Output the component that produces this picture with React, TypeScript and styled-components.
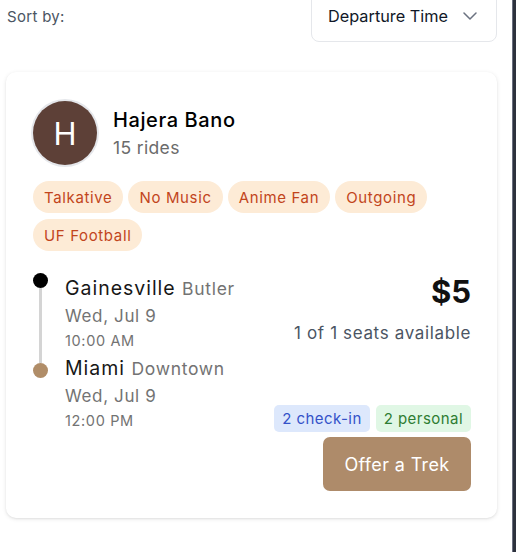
import React from "react";
import styled, { createGlobalStyle } from "styled-components";

const Global = createGlobalStyle`
  html, body { margin: 0; padding: 0; background: #ffffff; }
  body { font-family: Inter, "Noto Sans", sans-serif; overflow: hidden; }
  * { box-sizing: border-box; }
`;

const Frame = styled.div`
  display: flex;
  width: 516px;
  height: 552px;
  overflow: hidden;
`;

const Main = styled.main`
  flex: 1;
  padding: 0 15px 0 6px;
`;

const EdgeBar = styled.div`
  width: 4px;
  background: #2d323d;
  border-left: 1px solid #6b7080;
`;

const SortRow = styled.div`
  display: flex;
  align-items: center;
  justify-content: space-between;
  margin-top: -11px;
`;

const SortLabel = styled.span`
  font-size: 15px;
  color: #4b5563;
  padding: 1px 0 0 1px;
  letter-spacing: 0.02em;
`;

const Select = styled.div`
  width: 186px;
  height: 53px;
  border: 1px solid #e5e7eb;
  border-radius: 8px;
  display: flex;
  align-items: center;
  justify-content: space-between;
  padding: 0 19px 0 16px;
  font-size: 16.3px;
  color: #111827;
  background: #fff;
`;

const Card = styled.section`
  margin-top: 30px;
  background: #fff;
  border-radius: 10px;
  box-shadow: 0 1px 4px rgba(0, 0, 0, 0.1), 0 1px 2px rgba(0, 0, 0, 0.05);
  padding: 29px 26px 27px 27px;
  letter-spacing: 0.04em;
`;

const Header = styled.div`
  display: flex;
  align-items: center;
  gap: 16px;
`;

const Avatar = styled.div`
  width: 64px;
  height: 64px;
  border-radius: 50%;
  background: #5d4037;
  box-shadow: 0 0 0 2px #e5e7eb;
  color: #fff;
  font-size: 31px;
  letter-spacing: 0;
  display: flex;
  align-items: center;
  justify-content: center;
`;

const NameBlock = styled.div`
  display: flex;
  flex-direction: column;
  gap: 5px;
  margin-top: -1px;
`;

const Name = styled.div`
  font-size: 20px;
  font-weight: 500;
  color: #000;
  letter-spacing: 0.03em;
`;

const Rides = styled.div`
  font-size: 17.5px;
  color: #6b6b6b;
  letter-spacing: 0.02em;
`;

const Tags = styled.div`
  display: flex;
  flex-wrap: wrap;
  gap: 6px 5px;
  margin-top: 16px;
`;

const Tag = styled.span`
  height: 32px;
  padding: 0 11px;
  border-radius: 16px;
  background: #fdebd6;
  color: #c2451c;
  font-size: 15px;
  display: inline-flex;
  align-items: center;
`;

const Body = styled.div`
  display: flex;
  justify-content: space-between;
  margin-top: 22px;
`;

const Route = styled.div`
  display: grid;
  grid-template-columns: 14px 1fr;
  column-gap: 18px;
`;

const Rail = styled.div`
  display: flex;
  flex-direction: column;
  align-items: center;
`;

const Dot = styled.span<{ $color: string }>`
  width: 15px;
  height: 15px;
  border-radius: 50%;
  background: ${(p) => p.$color};
  flex-shrink: 0;
`;

const Line = styled.span`
  width: 3px;
  height: 75px;
  background: #d4d4d4;
`;

const Stops = styled.div`
  display: flex;
  flex-direction: column;
`;

const Stop = styled.div`
  display: flex;
  flex-direction: column;
`;

const City = styled.div`
  font-size: 19.5px;
  color: #171717;
  line-height: 31px;
  letter-spacing: 0.05em;
`;

const Area = styled.span`
  font-size: 17.5px;
  color: #737373;
  letter-spacing: 0.04em;
`;

const DateText = styled.div`
  font-size: 17px;
  color: #737373;
  line-height: 25px;
`;

const TimeText = styled.div`
  font-size: 14.5px;
  color: #737373;
  line-height: 24px;
`;

const Side = styled.div`
  display: flex;
  flex-direction: column;
  align-items: flex-end;
`;

const Price = styled.div`
  font-size: 31px;
  font-weight: 700;
  color: #111;
  line-height: 38px;
  letter-spacing: 0;
`;

const Seats = styled.div`
  font-size: 17px;
  color: #4b5563;
  margin-top: 12px;
`;

const Badges = styled.div`
  display: flex;
  gap: 6px;
  margin-top: 62px;
`;

const Badge = styled.span<{ $bg: string; $fg: string }>`
  height: 27px;
  padding: 0 8px;
  border-radius: 5px;
  background: ${(p) => p.$bg};
  color: ${(p) => p.$fg};
  font-size: 15px;
  letter-spacing: 0.03em;
  display: inline-flex;
  align-items: center;
`;

const Button = styled.button`
  margin-top: 5px;
  width: 148px;
  height: 54px;
  border: none;
  border-radius: 7px;
  background: #ae8b6a;
  color: #fff;
  font-family: inherit;
  font-size: 18px;
  letter-spacing: 0.02em;
  cursor: pointer;
`;

const Chevron = () => (
  <svg width="14" height="8" viewBox="0 0 14 8" fill="none" stroke="#6b7280" strokeWidth="1.5" strokeLinecap="round" strokeLinejoin="round">
    <path d="M1 1l6 6 6-6" />
  </svg>
);

const tags = ["Talkative", "No Music", "Anime Fan", "Outgoing", "UF Football"];

export default function App() {
  return (
    <>
      <Global />
      <Frame>
        <Main>
          <SortRow>
            <SortLabel>Sort by:</SortLabel>
            <Select>
              <span>Departure Time</span>
              <Chevron />
            </Select>
          </SortRow>
          <Card>
            <Header>
              <Avatar>H</Avatar>
              <NameBlock>
                <Name>Hajera Bano</Name>
                <Rides>15 rides</Rides>
              </NameBlock>
            </Header>
            <Tags>
              {tags.map((t) => (
                <Tag key={t}>{t}</Tag>
              ))}
            </Tags>
            <Body>
              <Route>
                <Rail>
                  <Dot $color="#000" />
                  <Line />
                  <Dot $color="#b08d68" />
                </Rail>
                <Stops>
                  <Stop>
                    <City>
                      Gainesville <Area>Butler</Area>
                    </City>
                    <DateText>Wed, Jul 9</DateText>
                    <TimeText>10:00 AM</TimeText>
                  </Stop>
                  <Stop>
                    <City>
                      Miami <Area>Downtown</Area>
                    </City>
                    <DateText>Wed, Jul 9</DateText>
                    <TimeText>12:00 PM</TimeText>
                  </Stop>
                </Stops>
              </Route>
              <Side>
                <Price>$5</Price>
                <Seats>1 of 1 seats available</Seats>
                <Badges>
                  <Badge $bg="#dde8fc" $fg="#3452c9">2 check-in</Badge>
                  <Badge $bg="#e0f7e5" $fg="#2e7d32">2 personal</Badge>
                </Badges>
                <Button>Offer a Trek</Button>
              </Side>
            </Body>
          </Card>
        </Main>
        <EdgeBar />
      </Frame>
    </>
  );
}
